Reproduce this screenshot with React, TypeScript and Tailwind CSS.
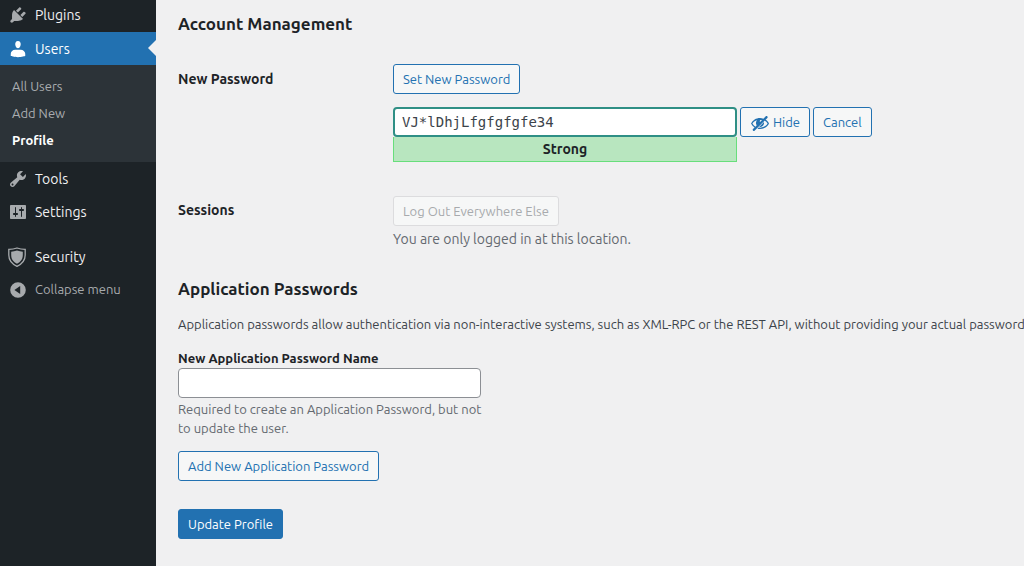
import type { ReactNode } from 'react';

const menuIcons: { [key: string]: ReactNode } = {
  plugins: (
    <path d="M13.11 4.36L9.87 7.6 8 5.73l3.24-3.24c.35-.34 1.05-.2 1.56.32.52.51.66 1.21.31 1.55zm-8 1.77l.91-1.12 9.01 9.01-1.19.84c-.71.71-2.63 1.16-3.82 1.16H6.14L4.9 17.26c-.59.59-1.54.59-2.12 0-.59-.58-.59-1.53 0-2.12l1.24-1.24v-3.88c0-1.13.4-3.19 1.09-3.89zm7.26 3.97l3.24-3.24c.34-.35 1.04-.21 1.55.31.52.51.66 1.21.31 1.55l-3.24 3.25z" />
  ),
  users: (
    <path d="M10 9.25c-2.27 0-2.73-3.44-2.73-3.44C7 4.02 7.82 2 9.97 2c2.16 0 2.98 2.02 2.71 3.81 0 0-.41 3.44-2.68 3.44zm0 1.5h2.72c2.39 0 4.52 1.83 4.52 3.9v2.37s-3.65 1.13-7.24 1.13c-3.65 0-7.24-1.13-7.24-1.13v-2.37c0-2.07 1.94-3.9 4.47-3.9z" />
  ),
  tools: (
    <path d="M16.68 9.77c-1.34 1.34-3.3 1.67-4.95.99l-5.41 6.52c-.99.99-2.59.99-3.58 0s-.99-2.59 0-3.57l6.52-5.42c-.68-1.65-.35-3.61.99-4.95 1.28-1.28 3.12-1.62 4.72-1.06l-2.89 2.89 2.82 2.82 2.86-2.87c.53 1.58.18 3.39-1.08 4.65zM3.81 16.21c.4.39 1.04.39 1.43 0 .4-.4.4-1.04 0-1.43-.39-.4-1.03-.4-1.43 0-.39.39-.39 1.03 0 1.43z" />
  ),
  settings: (
    <path d="M18 16V4c0-.55-.45-1-1-1H3c-.55 0-1 .45-1 1v12c0 .55.45 1 1 1h14c.55 0 1-.45 1-1zM8 11h1c.55 0 1 .45 1 1s-.45 1-1 1H8v1.5c0 .28-.22.5-.5.5s-.5-.22-.5-.5V13H6c-.55 0-1-.45-1-1s.45-1 1-1h1V5.5c0-.28.22-.5.5-.5s.5.22.5.5V11zm5-2h-1c-.55 0-1-.45-1-1s.45-1 1-1h1V5.5c0-.28.22-.5.5-.5s.5.22.5.5V7h1c.55 0 1 .45 1 1s-.45 1-1 1h-1v5.5c0 .28-.22.5-.5.5s-.5-.22-.5-.5V9z" />
  ),
  security: (
    <>
      <path
        d="M9 1C6.400 2 3.400 2.400.8 2.400V8c0 5.500 3.200 9 8.200 11.300C14 17 17.200 13.500 17.200 8V2.400C14.600 2.400 11.600 2 9 1z"
        fill="none"
        stroke="currentColor"
        strokeWidth="1.300"
      />
      <path d="M9 3.500C7 4.200 5 4.600 3.200 4.700V8c0 4.200 2.200 6.900 5.800 8.800 3.600-1.900 5.800-4.600 5.800-8.800V4.700C13 4.600 11 4.200 9 3.500z" />
    </>
  ),
  collapse: (
    <path
      fillRule="evenodd"
      d="M10 2.200a7.800 7.800 0 1 0 0 15.600 7.800 7.800 0 0 0 0-15.600zM12.200 6v8L6.400 10z"
    />
  ),
};

const MenuIcon = ({ name }: { name: string }) => (
  <svg viewBox="0 0 20 20" className="w-5 h-5 shrink-0 fill-current" aria-hidden="true">
    {menuIcons[name]}
  </svg>
);

const HiddenIcon = () => (
  <svg viewBox="0 0 20 20" className="w-5 h-5 shrink-0 fill-current" aria-hidden="true">
    <path d="M17.200 3.300l.16.17c.39.39.39 1.020 0 1.410L4.550 17.700c-.39.39-1.030.39-1.410 0l-.17-.17c-.39-.39-.39-1.020 0-1.410l1.590-1.600c-1.570-1-2.760-2.300-3.560-3.930.81-1.650 2.030-2.980 3.640-3.990S8.040 5.090 10 5.090c1.200 0 2.330.21 3.400.6l2.380-2.390c.39-.39 1.030-.39 1.420 0zm-7.090 4.010c-.23.25-.34.54-.34.88 0 .31.12.58.31.81l1.800-1.790c-.13-.12-.28-.21-.45-.26-.11-.01-.28-.03-.49-.04-.33.03-.6.16-.83.4zM2.400 10.590c.69 1.230 1.710 2.250 3.050 3.050l1.280-1.280c-.51-.69-.77-1.470-.77-2.360 0-1.060.36-1.980 1.090-2.760-1.040.27-1.960.7-2.760 1.260-.8.58-1.430 1.270-1.890 2.090z" />
    <path d="M15.400 6.600c1.600 1 2.800 2.340 3.600 3.990-.81 1.650-2.030 2.980-3.640 3.990S11.960 16.090 10 16.090c-.9 0-1.750-.12-2.560-.34l1.200-1.200c.44.07.9.1 1.360.1 3.300 0 6-1.400 7.600-4.060-.7-1.230-1.800-2.250-3.200-3zM14 9l.04 1c0 2.230-1.810 4.050-4.040 4.050l-.9-.1z" />
  </svg>
);

const menuItem = 'flex items-center gap-[7px] h-[33px] px-2 text-sm';
const button = 'flex items-center h-[30px] px-[9px] pt-[2px] rounded-[3px] border text-[13px] whitespace-nowrap';
const outlineButton = `${button} border-[#2271b1] bg-[#f6f7f7] text-[#2271b1]`;

const Sidebar = () => (
  <nav className="w-[156px] shrink-0 bg-[#1d2327] text-[#f0f0f1]">
    <a href="#plugins" className="flex items-center gap-[7px] h-8 px-2 pb-[2px] text-sm">
      <span className="text-[#a7aaad]"><MenuIcon name="plugins" /></span>
      Plugins
    </a>
    <a href="#users" className={`${menuItem} relative bg-[#2271b1] text-white`}>
      <MenuIcon name="users" />
      Users
      {/* Current page arrow */}
      <span className="absolute right-0 top-2 border-y-8 border-r-8 border-y-transparent border-r-[#f0f0f1]" />
    </a>
    <ul className="py-2 bg-[#2c3338] text-[13px] leading-[27px] text-[#a9acaf]">
      <li><a href="#all-users" className="block px-3">All Users</a></li>
      <li><a href="#add-new" className="block px-3">Add New</a></li>
      <li><a href="#profile" className="block px-3 font-semibold text-white">Profile</a></li>
    </ul>
    <a href="#tools" className={menuItem}>
      <span className="text-[#a7aaad]"><MenuIcon name="tools" /></span>
      Tools
    </a>
    <a href="#settings" className={menuItem}>
      <span className="text-[#a7aaad]"><MenuIcon name="settings" /></span>
      Settings
    </a>
    <a href="#security" className={`${menuItem} mt-3`}>
      <span className="text-[#a7aaad]"><MenuIcon name="security" /></span>
      Security
    </a>
    <button type="button" className="flex items-center gap-[7px] h-[33px] px-2 text-[13px] text-[#a7aaad]">
      <MenuIcon name="collapse" />
      Collapse menu
    </button>
  </nav>
);

const App = () => {
  return (
    <div className="flex min-h-screen overflow-hidden bg-[#f0f0f1] text-[#3c434a] font-['Ubuntu','Noto_Sans',sans-serif]">
      <Sidebar />

      <main className="flex-1 min-w-0 pl-[22px] pt-3">
        <h2 className="text-[17px] leading-6 font-semibold text-[#1d2327]">Account Management</h2>

        {/* New password */}
        <div className="flex mt-7">
          <label htmlFor="new-password" className="w-[215px] shrink-0 pt-[5px] text-sm leading-5 font-semibold text-[#1d2327]">
            New Password
          </label>
          <div>
            <button type="button" className={outlineButton}>Set New Password</button>
            <div className="flex items-start gap-[3px] mt-[13px]">
              <div className="w-[344px]">
                <input
                  id="new-password"
                  type="text"
                  defaultValue="VJ*lDhjLfgfgfgfe34"
                  className="block w-full h-[30px] px-[7px] rounded border-2 border-[#2f8f85] bg-white font-['DejaVu_Sans_Mono',monospace] text-sm text-[#3c434a]"
                />
                <div className="h-[25px] border border-t-0 border-[#68de7c] bg-[#b8e6bf] text-center text-sm leading-6 font-semibold text-[#1d2327]">
                  Strong
                </div>
              </div>
              <button type="button" className={`${outlineButton} gap-[3px]`}>
                <HiddenIcon />
                Hide
              </button>
              <button type="button" className={outlineButton}>Cancel</button>
            </div>
          </div>
        </div>

        {/* Sessions */}
        <div className="flex mt-[34px]">
          <h3 className="w-[215px] shrink-0 pt-1 text-sm leading-5 font-semibold text-[#1d2327]">Sessions</h3>
          <div>
            <button type="button" disabled className={`${button} border-[#dcdcde] bg-[#f6f7f7] text-[#a7aaad]`}>
              Log Out Everywhere Else
            </button>
            <p className="mt-[3px] text-sm leading-5 text-[#646970]">You are only logged in at this location.</p>
          </div>
        </div>

        <h2 className="mt-7 text-[17px] leading-6 font-semibold text-[#1d2327]">Application Passwords</h2>
        <p className="mt-[13px] text-[13px] leading-5 whitespace-nowrap overflow-hidden">
          Application passwords allow authentication via non-interactive systems, such as XML-RPC or the REST API, without providing your actual password. Application passwords can be easily revoked.
        </p>

        <div className="mt-[14px] w-[312px]">
          <label htmlFor="app-name" className="block text-[13px] leading-5 font-semibold text-[#1d2327]">
            New Application Password Name
          </label>
          <input
            id="app-name"
            type="text"
            className="block w-[303px] h-[30px] px-2 rounded border border-[#8c8f94] bg-white text-sm"
          />
          <p className="mt-[2px] text-[13px] leading-[19px] text-[#646970]">
            Required to create an Application Password, but not to update the user.
          </p>
        </div>

        <button type="button" className={`${outlineButton} mt-[13px]`}>Add New Application Password</button>
        <button type="button" className={`${button} mt-7 border-[#2271b1] bg-[#2271b1] text-white`}>
          Update Profile
        </button>
      </main>
    </div>
  );
};

export default App;
